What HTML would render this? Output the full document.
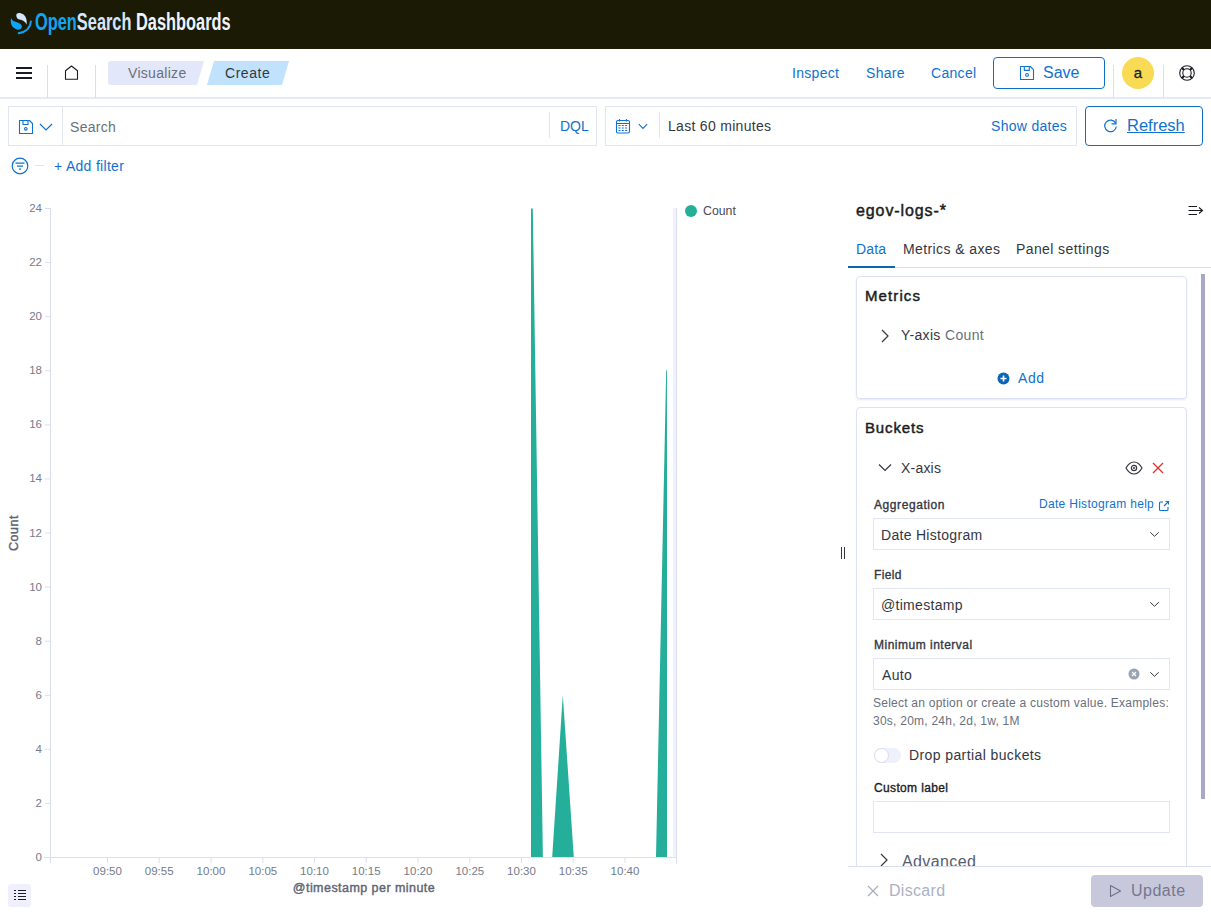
<!DOCTYPE html>
<html><head><meta charset="utf-8">
<style>
*{box-sizing:border-box;margin:0;padding:0}
html,body{width:1211px;height:915px;overflow:hidden;background:#fff;font-family:"Liberation Sans",sans-serif;color:#343741}
.a{position:absolute;white-space:nowrap}
#hdr{position:absolute;left:0;top:0;width:1211px;height:49px;background:#1b1a04}
.blue{color:#0f72d0}
.bd{border:1px solid #e2e5f6}
</style></head><body>
<!-- header -->
<div id="hdr">
  <svg class="a" style="left:6px;top:8px" width="32" height="32" viewBox="0 0 32 32">
    <path d="M10.3 7.2C10.3 4.3 14.6 4.2 17.6 6.6C20.3 8.8 21.2 13 20.6 16.5C19.3 13.6 16.4 12.2 13.4 11.6C11.3 11.1 10.3 9.3 10.3 7.2Z" fill="#d4e6ff"/>
    <path d="M5.2 10C3.9 14.2 5.2 19.2 10.2 21.2C14.2 22.7 16.6 20.2 15.6 17.6C14.6 15.2 11.2 14.6 8.7 13.6C6.7 12.7 5.6 11.6 5.2 10Z" fill="#12a4f4"/>
    <path d="M24.9 13.4Q24.2 23.2 12.6 25.3" stroke="#12a4f4" stroke-width="1.9" fill="none" stroke-linecap="round"/>
  </svg>
  <div class="a" style="left:35px;top:9px;font-size:23px;font-weight:bold;transform:scaleX(0.712);transform-origin:0 0"><span style="color:#12a4f4">Open</span><span style="color:#d4e6ff">Search</span> <span style="color:#eef4ff">Dashboards</span></div>
</div>
<!-- nav -->
<div class="a" style="left:0;top:97px;width:1211px;height:2px;background:#e6e9f8"></div>
<div class="a" style="left:47px;top:65px;width:1px;height:33px;background:#d9ddf6"></div>
<div class="a" style="left:95px;top:65px;width:1px;height:33px;background:#d9ddf6"></div>
<svg class="a" style="left:16px;top:66px" width="16" height="14" viewBox="0 0 16 14"><path d="M0 2h16M0 7h16M0 12h16" stroke="#1a1c21" stroke-width="2"/></svg>
<svg class="a" style="left:64px;top:65px" width="16" height="16" viewBox="0 0 16 16"><path d="M1.5 14.3V5.8L7.5 1L13.5 5.8V14.3Z" fill="none" stroke="#1a1c21" stroke-width="1.1" stroke-linejoin="round"/></svg>
<svg class="a" style="left:108px;top:61px" width="182" height="25" viewBox="0 0 182 25">
  <path d="M3 0H96L89 24H3Q0 24 0 21V3Q0 0 3 0Z" fill="#e3e7fa"/>
  <path d="M106 0H181L174 24H99Z" fill="#c0e2fd"/>
</svg>
<div class="a" style="left:128px;top:65px;font-size:14px;letter-spacing:0.3px;color:#69707d">Visualize</div>
<div class="a" style="left:225px;top:65px;font-size:14px;letter-spacing:0.55px;color:#343741">Create</div>
<div class="a blue" style="left:792px;top:65px;font-size:14px;letter-spacing:0.3px">Inspect</div>
<div class="a blue" style="left:866px;top:65px;font-size:14px;letter-spacing:0.3px">Share</div>
<div class="a blue" style="left:931px;top:65px;font-size:14px;letter-spacing:0.3px">Cancel</div>
<div class="a" style="left:993px;top:57px;width:112px;height:32px;border:1px solid #0f6fc6;border-radius:4px"></div>
<svg class="a" style="left:1019px;top:65px" width="16" height="16" viewBox="0 0 16 16"><path d="M1.5 1.5H11.3L14.5 4.7V14.5H1.5Z M5.3 1.5V5.4H10.3V1.5" fill="none" stroke="#0f72d0" stroke-width="1.1" stroke-linejoin="round"/><circle cx="8" cy="9.9" r="1.4" fill="none" stroke="#0f72d0" stroke-width="1.1"/></svg>
<div class="a blue" style="left:1043px;top:64px;font-size:16px">Save</div>
<div class="a" style="left:1113px;top:65px;width:1px;height:33px;background:#d9ddf6"></div>
<div class="a" style="left:1122px;top:57px;width:32px;height:32px;border-radius:50%;background:#f9da55"></div>
<div class="a" style="left:1122px;top:64px;width:32px;text-align:center;font-size:15px;color:#1a1c21;-webkit-text-stroke:0.3px #1a1c21">a</div>
<div class="a" style="left:1163px;top:65px;width:1px;height:33px;background:#d9ddf6"></div>
<svg class="a" style="left:1179px;top:65px" width="16" height="16" viewBox="0 0 16 16"><circle cx="8" cy="8" r="7.3" fill="none" stroke="#1a1c21" stroke-width="1.1"/><circle cx="8" cy="8" r="4.2" fill="none" stroke="#1a1c21" stroke-width="1.1"/><path d="M2.8 2.8L5 5M13.2 2.8L11 5M2.8 13.2L5 11M13.2 13.2L11 11" stroke="#1a1c21" stroke-width="2.2"/></svg>

<!-- query bar -->
<div class="a bd" style="left:8px;top:106px;width:589px;height:40px"></div>
<div class="a" style="left:62px;top:107px;width:1px;height:38px;background:#e3e6f2"></div>
<div class="a" style="left:549px;top:112px;width:1px;height:26px;background:#e3e6f2"></div>
<div class="a" style="left:70px;top:119px;font-size:14px;letter-spacing:0.3px;color:#69707d">Search</div>
<div class="a blue" style="left:560px;top:118px;font-size:14px;letter-spacing:0px">DQL</div>
<div class="a bd" style="left:605px;top:106px;width:472px;height:40px"></div>
<div class="a" style="left:659px;top:112px;width:1px;height:26px;background:#e3e6f2"></div>
<div class="a" style="left:668px;top:118px;font-size:14px;letter-spacing:0.3px;color:#343741">Last 60 minutes</div>
<div class="a blue" style="left:991px;top:118px;font-size:14px;letter-spacing:0.3px">Show dates</div>
<div class="a" style="left:1085px;top:106px;width:118px;height:40px;border:1px solid #0f6fc6;border-radius:4px"></div>
<div class="a blue" style="left:1127px;top:116px;font-size:16.5px;text-decoration:underline">Refresh</div>
<div class="a blue" style="left:54px;top:158px;font-size:14px;letter-spacing:0.3px">+ Add filter</div>


<svg class="a" style="left:18px;top:119px" width="16" height="16" viewBox="0 0 16 16"><path d="M1.5 1.5H11.5L14.5 4.5V14.5H1.5Z M5 1.5V5.5H10V1.5" fill="none" stroke="#0f72d0" stroke-width="1.1" stroke-linejoin="round"/><circle cx="7.8" cy="9.8" r="1.3" fill="none" stroke="#0f72d0" stroke-width="1.1"/></svg>
<svg class="a" style="left:39px;top:122px" width="14" height="9" viewBox="0 0 14 9"><path d="M1 2L7 8L13 2" stroke="#0f72d0" stroke-width="1.2" fill="none"/></svg>
<svg class="a" style="left:615px;top:118px" width="16" height="16" viewBox="0 0 16 16"><rect x="1.5" y="2.5" width="13" height="12.5" rx="1.5" fill="none" stroke="#0f72d0" stroke-width="1.1"/><path d="M1.5 5.5H14.5M4.5 1V3.5M11.5 1V3.5" stroke="#0f72d0" stroke-width="1.1"/><path d="M3.5 7.5h2M6.8 7.5h2M10.1 7.5h2M3.5 10h2M6.8 10h2M10.1 10h2M3.5 12.5h2M6.8 12.5h2M10.1 12.5h2" stroke="#0f72d0" stroke-width="1.1"/></svg>
<svg class="a" style="left:638px;top:123px" width="10" height="7" viewBox="0 0 10 7"><path d="M0.8 1.2L5 5.4L9.2 1.2" stroke="#0f72d0" stroke-width="1.1" fill="none"/></svg>
<svg class="a" style="left:1104px;top:118px" width="14" height="15" viewBox="0 0 14 15"><path d="M11.7 5.2A5.8 5.8 0 1 0 12.3 8.5" fill="none" stroke="#0f72d0" stroke-width="1.2"/><path d="M12 1V5.8H7.5" fill="none" stroke="#0f72d0" stroke-width="1.2"/></svg>
<svg class="a" style="left:11px;top:157px" width="18" height="18" viewBox="0 0 18 18"><circle cx="9" cy="9" r="7.8" fill="none" stroke="#0f72d0" stroke-width="1.2"/><path d="M4.5 6.2H13.5M6 9.2H12M8 12.2H10" stroke="#0f72d0" stroke-width="1.2"/></svg>
<div class="a" style="left:35px;top:165px;width:9px;height:1px;background:#dfe3f3"></div>

<!-- chart -->
<svg class="a" style="left:0;top:190px" width="840" height="725" viewBox="0 190 840 725">
<rect x="673" y="208" width="4" height="649" fill="#f1f2fd"/><path d="M50.5 208V863M44 857.5H677M676.5 208V864" stroke="#dadef4" stroke-width="1" fill="none"/>
<path d="M45 208.5H50" stroke="#dadef4" stroke-width="1"/>
<text x="42" y="212.0" text-anchor="end" font-size="11.5" fill="#757b8a">24</text>
<path d="M45 262.6H50" stroke="#dadef4" stroke-width="1"/>
<text x="42" y="266.1" text-anchor="end" font-size="11.5" fill="#757b8a">22</text>
<path d="M45 316.7H50" stroke="#dadef4" stroke-width="1"/>
<text x="42" y="320.2" text-anchor="end" font-size="11.5" fill="#757b8a">20</text>
<path d="M45 370.8H50" stroke="#dadef4" stroke-width="1"/>
<text x="42" y="374.3" text-anchor="end" font-size="11.5" fill="#757b8a">18</text>
<path d="M45 424.9H50" stroke="#dadef4" stroke-width="1"/>
<text x="42" y="428.4" text-anchor="end" font-size="11.5" fill="#757b8a">16</text>
<path d="M45 478.9H50" stroke="#dadef4" stroke-width="1"/>
<text x="42" y="482.4" text-anchor="end" font-size="11.5" fill="#757b8a">14</text>
<path d="M45 533.0H50" stroke="#dadef4" stroke-width="1"/>
<text x="42" y="536.5" text-anchor="end" font-size="11.5" fill="#757b8a">12</text>
<path d="M45 587.1H50" stroke="#dadef4" stroke-width="1"/>
<text x="42" y="590.6" text-anchor="end" font-size="11.5" fill="#757b8a">10</text>
<path d="M45 641.2H50" stroke="#dadef4" stroke-width="1"/>
<text x="42" y="644.7" text-anchor="end" font-size="11.5" fill="#757b8a">8</text>
<path d="M45 695.3H50" stroke="#dadef4" stroke-width="1"/>
<text x="42" y="698.8" text-anchor="end" font-size="11.5" fill="#757b8a">6</text>
<path d="M45 749.3H50" stroke="#dadef4" stroke-width="1"/>
<text x="42" y="752.8" text-anchor="end" font-size="11.5" fill="#757b8a">4</text>
<path d="M45 803.4H50" stroke="#dadef4" stroke-width="1"/>
<text x="42" y="806.9" text-anchor="end" font-size="11.5" fill="#757b8a">2</text>
<path d="M45 857.5H50" stroke="#dadef4" stroke-width="1"/>
<text x="42" y="861.0" text-anchor="end" font-size="11.5" fill="#757b8a">0</text>
<path d="M107.5 857V863" stroke="#dadef4" stroke-width="1"/>
<text x="107.5" y="875" text-anchor="middle" font-size="11.5" fill="#757b8a">09:50</text>
<path d="M159.2 857V863" stroke="#dadef4" stroke-width="1"/>
<text x="159.2" y="875" text-anchor="middle" font-size="11.5" fill="#757b8a">09:55</text>
<path d="M211.0 857V863" stroke="#dadef4" stroke-width="1"/>
<text x="211.0" y="875" text-anchor="middle" font-size="11.5" fill="#757b8a">10:00</text>
<path d="M262.8 857V863" stroke="#dadef4" stroke-width="1"/>
<text x="262.8" y="875" text-anchor="middle" font-size="11.5" fill="#757b8a">10:05</text>
<path d="M314.5 857V863" stroke="#dadef4" stroke-width="1"/>
<text x="314.5" y="875" text-anchor="middle" font-size="11.5" fill="#757b8a">10:10</text>
<path d="M366.2 857V863" stroke="#dadef4" stroke-width="1"/>
<text x="366.2" y="875" text-anchor="middle" font-size="11.5" fill="#757b8a">10:15</text>
<path d="M418.0 857V863" stroke="#dadef4" stroke-width="1"/>
<text x="418.0" y="875" text-anchor="middle" font-size="11.5" fill="#757b8a">10:20</text>
<path d="M469.8 857V863" stroke="#dadef4" stroke-width="1"/>
<text x="469.8" y="875" text-anchor="middle" font-size="11.5" fill="#757b8a">10:25</text>
<path d="M521.5 857V863" stroke="#dadef4" stroke-width="1"/>
<text x="521.5" y="875" text-anchor="middle" font-size="11.5" fill="#757b8a">10:30</text>
<path d="M573.2 857V863" stroke="#dadef4" stroke-width="1"/>
<text x="573.2" y="875" text-anchor="middle" font-size="11.5" fill="#757b8a">10:35</text>
<path d="M625.0 857V863" stroke="#dadef4" stroke-width="1"/>
<text x="625.0" y="875" text-anchor="middle" font-size="11.5" fill="#757b8a">10:40</text>
<path d="M531 857V208.5H532.8L542.9 857Z M552.2 857L562.8 695L573.8 857Z M656 857L666.2 370.3H667V857Z" fill="#25af9b"/>
<text x="364" y="892" text-anchor="middle" font-size="12.5" fill="#5f6573" stroke="#5f6573" stroke-width="0.4" letter-spacing="0.45">@timestamp per minute</text>
<text transform="translate(18 533) rotate(-90)" text-anchor="middle" font-size="12.5" fill="#5f6573" stroke="#5f6573" stroke-width="0.4" letter-spacing="0.5">Count</text>
<circle cx="691" cy="211" r="6" fill="#25af9b"/>
<text x="703" y="215" font-size="12.3" fill="#454a56">Count</text>
</svg>


<div class="a" style="left:8px;top:884px;width:23px;height:23px;border-radius:3px;background:#eff0fb"></div>
<svg class="a" style="left:13px;top:889px" width="14" height="12" viewBox="0 0 14 12"><path d="M1 1.5h2M5 1.5h8M1 4.5h2M5 4.5h8M1 7.5h2M5 7.5h8M1 10.5h2M5 10.5h8" stroke="#1a1c21" stroke-width="1.1"/></svg>
<!-- sidebar -->
<div class="a" style="left:841px;top:547px;width:1px;height:12px;background:#343741"></div>
<div class="a" style="left:844px;top:547px;width:1px;height:12px;background:#343741"></div>
<div class="a" style="left:856px;top:202px;font-size:16px;color:#1a1c21;-webkit-text-stroke:0.45px #1a1c21;letter-spacing:0.9px">egov-logs-*</div>
<svg class="a" style="left:1188px;top:204px" width="16" height="13" viewBox="0 0 16 13"><path d="M0.5 2.5H9M0.5 6.5H14M0.5 10.5H9M11 3.5L14.5 6.5L11 9.5" stroke="#1a1c21" stroke-width="1.1" fill="none"/></svg>
<div class="a" style="left:856px;top:241px;font-size:14px;color:#0f72d0;letter-spacing:0.15px">Data</div>
<div class="a" style="left:903px;top:241px;font-size:14px;color:#343741;letter-spacing:0.4px">Metrics &amp; axes</div>
<div class="a" style="left:1016px;top:241px;font-size:14px;color:#343741;letter-spacing:0.4px">Panel settings</div>
<div class="a" style="left:848px;top:267px;width:363px;height:1px;background:#d8dcef"></div>
<div class="a" style="left:848px;top:266px;width:47px;height:2px;background:#0b64b4"></div>
<div class="a" style="left:1201px;top:274px;width:4px;height:525px;background:#a8a9c6"></div>

<div class="a" style="left:856px;top:276px;width:331px;height:123px;border:1px solid #dde1f6;border-radius:4px;box-shadow:0 1px 2px #e3e6f8"></div>
<div class="a" style="left:865px;top:287px;font-size:15px;color:#1a1c21;-webkit-text-stroke:0.45px #1a1c21;letter-spacing:1.1px">Metrics</div>
<svg class="a" style="left:880px;top:329px" width="10" height="14" viewBox="0 0 10 14"><path d="M2 1L8 7L2 13" stroke="#343741" stroke-width="1.2" fill="none"/></svg>
<div class="a" style="left:901px;top:327px;font-size:14px;color:#343741;letter-spacing:0.35px">Y-axis <span style="color:#69707d">Count</span></div>
<svg class="a" style="left:997px;top:372px" width="13" height="13" viewBox="0 0 13 13"><circle cx="6.5" cy="6.5" r="6" fill="#0b64b4"/><path d="M6.5 3.5V9.5M3.5 6.5H9.5" stroke="#fff" stroke-width="1.6"/></svg>
<div class="a" style="left:1018px;top:370px;font-size:14px;color:#0f72d0;letter-spacing:0.6px">Add</div>

<div class="a" style="left:856px;top:407px;width:331px;height:470px;border:1px solid #dde1f6;border-radius:4px"></div>
<div class="a" style="left:865px;top:419px;font-size:15px;color:#1a1c21;-webkit-text-stroke:0.45px #1a1c21;letter-spacing:0.85px">Buckets</div>
<svg class="a" style="left:878px;top:462px" width="14" height="10" viewBox="0 0 14 10"><path d="M1 2.5L7 8.5L13 2.5" stroke="#343741" stroke-width="1.2" fill="none"/></svg>
<div class="a" style="left:901px;top:460px;font-size:14px;color:#343741;letter-spacing:0.2px">X-axis</div>
<svg class="a" style="left:1125px;top:461px" width="18" height="14" viewBox="0 0 18 14"><path d="M1 7C3.5 2.5 6 1 9 1S14.5 2.5 17 7C14.5 11.5 12 13 9 13S3.5 11.5 1 7Z" fill="none" stroke="#343741" stroke-width="1.2"/><circle cx="9" cy="7" r="2.6" fill="none" stroke="#343741" stroke-width="1.2"/><circle cx="9" cy="7" r="1" fill="#343741"/></svg>
<svg class="a" style="left:1152px;top:462px" width="12" height="12" viewBox="0 0 12 12"><path d="M1 1L11 11M11 1L1 11" stroke="#e0312a" stroke-width="1.3"/></svg>

<div class="a" style="left:874px;top:498px;font-size:12px;color:#343741;-webkit-text-stroke:0.35px #343741;letter-spacing:0.58px">Aggregation</div>
<div class="a" style="left:1039px;top:497px;font-size:12px;color:#0f72d0;letter-spacing:0.3px">Date Histogram help</div>
<svg class="a" style="left:1158px;top:500px" width="12" height="12" viewBox="0 0 12 12"><path d="M5 2H2.5Q1.5 2 1.5 3V9.5Q1.5 10.5 2.5 10.5H9Q10 10.5 10 9.5V7M6 6L10.5 1.5M7.5 1.5H10.5V4.5" stroke="#0f72d0" stroke-width="1.1" fill="none"/></svg>
<div class="a bd" style="left:873px;top:518px;width:297px;height:32px"></div>
<div class="a" style="left:881px;top:527px;font-size:14px;color:#343741;letter-spacing:0.3px">Date Histogram</div>
<svg class="a" style="left:1149px;top:530px" width="11" height="8" viewBox="0 0 11 8"><path d="M1.3 2.3L5.5 6.3L9.7 2.3" stroke="#343741" stroke-width="1" fill="none"/></svg>

<div class="a" style="left:874px;top:568px;font-size:12px;color:#343741;-webkit-text-stroke:0.35px #343741;letter-spacing:0.35px">Field</div>
<div class="a bd" style="left:873px;top:588px;width:297px;height:32px"></div>
<div class="a" style="left:881px;top:597px;font-size:14px;color:#343741;letter-spacing:0.3px">@timestamp</div>
<svg class="a" style="left:1149px;top:600px" width="11" height="8" viewBox="0 0 11 8"><path d="M1.3 2.3L5.5 6.3L9.7 2.3" stroke="#343741" stroke-width="1" fill="none"/></svg>

<div class="a" style="left:874px;top:638px;font-size:12px;color:#343741;-webkit-text-stroke:0.35px #343741;letter-spacing:0.5px">Minimum interval</div>
<div class="a bd" style="left:873px;top:658px;width:297px;height:32px"></div>
<div class="a" style="left:882px;top:667px;font-size:14px;color:#343741;letter-spacing:0.3px">Auto</div>
<svg class="a" style="left:1128px;top:668px" width="12" height="12" viewBox="0 0 12 12"><circle cx="6" cy="6" r="5.5" fill="#98a2b3"/><path d="M4 4L8 8M8 4L4 8" stroke="#fff" stroke-width="1.3"/></svg>
<svg class="a" style="left:1149px;top:670px" width="11" height="8" viewBox="0 0 11 8"><path d="M1.3 2.3L5.5 6.3L9.7 2.3" stroke="#343741" stroke-width="1" fill="none"/></svg>
<div class="a" style="left:873px;top:694px;font-size:12px;line-height:18px;color:#69707d;letter-spacing:0.24px">Select an option or create a custom value. Examples:<br>30s, 20m, 24h, 2d, 1w, 1M</div>

<div class="a" style="left:874px;top:748px;width:27px;height:15px;border-radius:8px;background:#eef0fb"></div>
<div class="a" style="left:874px;top:748px;width:15px;height:15px;border-radius:50%;background:#fff;border:1px solid #d6d9f6"></div>
<div class="a" style="left:909px;top:747px;font-size:14px;color:#343741;letter-spacing:0.4px">Drop partial buckets</div>

<div class="a" style="left:874px;top:781px;font-size:12px;color:#1a1c21;-webkit-text-stroke:0.35px #1a1c21;letter-spacing:0.35px">Custom label</div>
<div class="a bd" style="left:873px;top:801px;width:297px;height:32px"></div>
<svg class="a" style="left:879px;top:853px" width="10" height="14" viewBox="0 0 10 14"><path d="M2 1L8 7L2 13" stroke="#343741" stroke-width="1.2" fill="none"/></svg>
<div class="a" style="left:902px;top:853px;font-size:16px;color:#575c69;letter-spacing:0.4px">Advanced</div>

<div class="a" style="left:848px;top:866px;width:363px;height:49px;background:#fff;border-top:1px solid #d8dcef"></div>
<svg class="a" style="left:867px;top:885px" width="12" height="12" viewBox="0 0 12 12"><path d="M1 1L11 11M11 1L1 11" stroke="#a2abba" stroke-width="1.1"/></svg>
<div class="a" style="left:889px;top:882px;font-size:16px;color:#abb1c2;letter-spacing:0.3px">Discard</div>
<div class="a" style="left:1091px;top:875px;width:112px;height:32px;border-radius:4px;background:#c8c8dc"></div>
<svg class="a" style="left:1109px;top:884px" width="13" height="14" viewBox="0 0 13 14"><path d="M1.5 1.5V12.5L11.5 7Z" stroke="#6e7186" stroke-width="1.1" fill="none" stroke-linejoin="round"/></svg>
<div class="a" style="left:1131px;top:882px;font-size:16px;color:#75778d;letter-spacing:0.5px">Update</div>

</body></html>
